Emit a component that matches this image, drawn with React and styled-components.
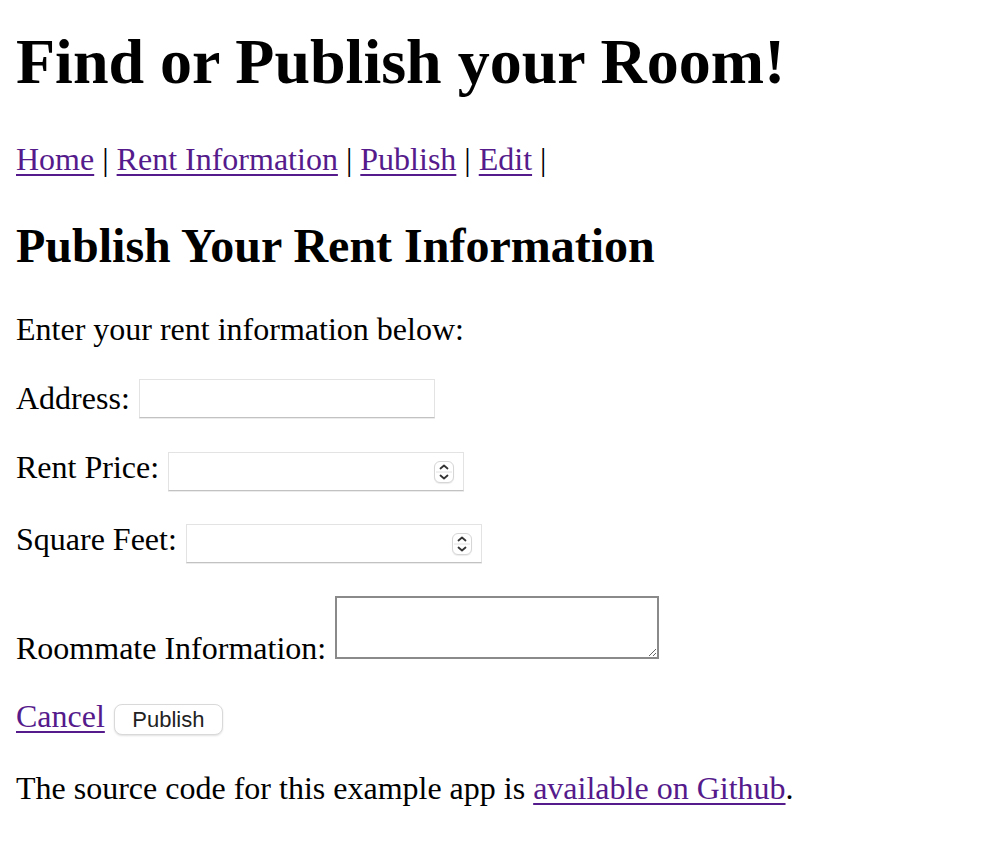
import React from 'react';
import styled, { createGlobalStyle } from 'styled-components';

const GlobalStyle = createGlobalStyle`
  html, body {
    margin: 0;
    padding: 0;
    background: #fff;
  }
  body {
    font-family: "Liberation Serif", "Times New Roman", serif;
    color: #000;
  }
`;

const Page = styled.div`
  padding: 0 16px;
  overflow: hidden;
`;

const Title = styled.h1`
  font-size: 64px;
  line-height: 74px;
  font-weight: 700;
  margin: 25px 0 42px;
`;

const Nav = styled.p`
  font-size: 32px;
  line-height: 37px;
  margin: 0 0 40px;
`;

const Link = styled.a`
  color: #551a8b;
  text-decoration: underline;
  text-decoration-thickness: 2px;
  text-underline-offset: 4px;
  cursor: pointer;
`;

const SectionTitle = styled.h2`
  font-size: 48px;
  line-height: 55px;
  font-weight: 700;
  margin: 0 0 38px;
`;

const Text = styled.p`
  font-size: 32px;
  line-height: 37px;
  margin: 0;
`;

const Form = styled.form`
  display: flex;
  flex-direction: column;
  margin-top: 31px;
`;

const Row = styled.div`
  display: flex;
  align-items: flex-end;
  gap: 9px;
  margin-top: ${p => p.$top ?? 33}px;
  &:first-child {
    margin-top: 0;
  }
`;

const FieldLabel = styled.label`
  font-size: 32px;
  line-height: 37px;
  margin-bottom: ${p => p.$lift || 0}px;
  white-space: nowrap;
`;

const InputWrap = styled.div`
  position: relative;
  display: flex;
`;

const TextInput = styled.input`
  box-sizing: border-box;
  width: 296px;
  height: 39px;
  margin: 0;
  padding: 0 8px;
  border: 1px solid #e3e3e3;
  border-bottom-color: #c2c2c2;
  box-shadow: 0 1px 0 #ececec;
  background: #fff;
  font-size: 26px;
  outline: none;
  -moz-appearance: textfield;
  &::-webkit-inner-spin-button,
  &::-webkit-outer-spin-button {
    -webkit-appearance: none;
    margin: 0;
  }
`;

const Stepper = styled.span`
  position: absolute;
  right: 10px;
  top: 9px;
  width: 20px;
  height: 22px;
  box-sizing: border-box;
  border: 1px solid #d6d6d6;
  border-radius: 6px;
  background: #fff;
  box-shadow: 0 1px 1px rgba(0, 0, 0, 0.08);
  display: flex;
  pointer-events: none;
`;

const TextArea = styled.textarea`
  box-sizing: border-box;
  width: 324px;
  height: 63px;
  margin: 0 0 8px;
  padding: 2px;
  border: 2px solid #8a8a8a;
  background: #fff;
  resize: both;
  font-size: 26px;
  outline: none;
`;

const Button = styled.button`
  box-sizing: border-box;
  width: 109px;
  height: 31px;
  margin: 0;
  padding: 0;
  background: #fff;
  border: 1px solid #d9d9d9;
  border-radius: 8px;
  box-shadow: 0 1px 2px rgba(0, 0, 0, 0.12);
  font-family: "Liberation Sans", Arial, sans-serif;
  font-size: 22px;
  color: #222;
  cursor: pointer;
`;

const Footer = styled.p`
  font-size: 32px;
  line-height: 37px;
  margin: 35px 0 0;
`;

const StepIcon = () => (
  <svg width="18" height="20" viewBox="0 0 18 20">
    <line x1="1" y1="10" x2="17" y2="10" stroke="#e2e2e2" strokeWidth="1" />
    <path d="M5.5 6.5 L9 3.5 L12.5 6.5" fill="none" stroke="#333" strokeWidth="1.8" strokeLinecap="round" strokeLinejoin="round" />
    <path d="M5.5 13.5 L9 16.5 L12.5 13.5" fill="none" stroke="#333" strokeWidth="1.8" strokeLinecap="round" strokeLinejoin="round" />
  </svg>
);

const NumberField = ({ id }) => (
  <InputWrap>
    <TextInput id={id} type="number" />
    <Stepper>
      <StepIcon />
    </Stepper>
  </InputWrap>
);

const App = () => {
  return (
    <>
      <GlobalStyle />
      <Page>
        <Title>Find or Publish your Room!</Title>
        <Nav>
          <Link>Home</Link> | <Link>Rent Information</Link> | <Link>Publish</Link> | <Link>Edit</Link> |
        </Nav>
        <SectionTitle>Publish Your Rent Information</SectionTitle>
        <Text>Enter your rent information below:</Text>
        <Form onSubmit={e => e.preventDefault()}>
          <Row>
            <FieldLabel htmlFor="address" $lift={1}>Address:</FieldLabel>
            <TextInput id="address" type="text" />
          </Row>
          <Row $top={31}>
            <FieldLabel htmlFor="price" $lift={5}>Rent Price:</FieldLabel>
            <NumberField id="price" />
          </Row>
          <Row $top={30}>
            <FieldLabel htmlFor="feet" $lift={5}>Square Feet:</FieldLabel>
            <NumberField id="feet" />
          </Row>
          <Row $top={33}>
            <FieldLabel htmlFor="roommate">Roommate Information:</FieldLabel>
            <TextArea id="roommate" />
          </Row>
          <Row $top={31}>
            <FieldLabel as="span"><Link>Cancel</Link></FieldLabel>
            <Button type="submit">Publish</Button>
          </Row>
        </Form>
        <Footer>
          The source code for this example app is <Link>available on Github</Link>.
        </Footer>
      </Page>
    </>
  );
};

export default App;
